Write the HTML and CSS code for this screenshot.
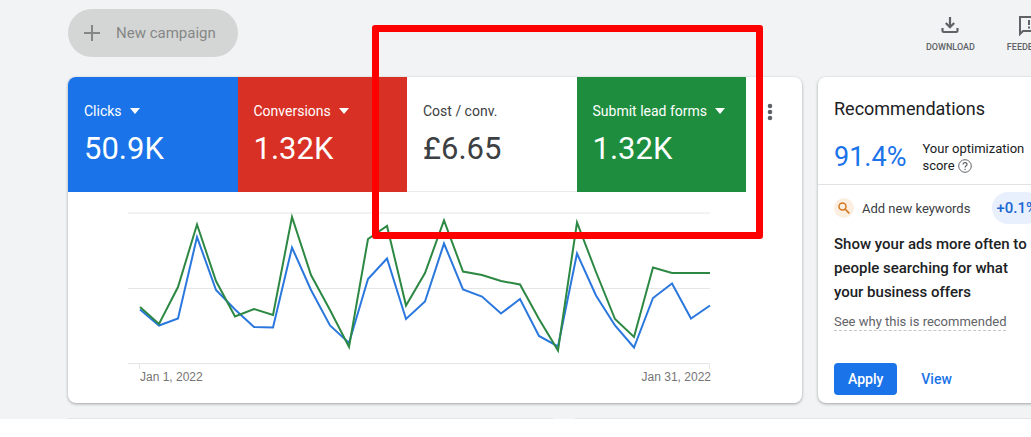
FILE: index.html
```html
<!DOCTYPE html>
<html lang="en">
<head>
<meta charset="utf-8">
<meta name="viewport" content="width=device-width, initial-scale=1">
<title>Campaign overview</title>
<link rel="stylesheet" href="styles.css">
</head>
<body>
<div class="app">
  <header class="toolbar">
    <button class="new-campaign" type="button">
      <svg width="16" height="16" viewBox="0 0 16 16" aria-hidden="true"><path d="M8 0v16M0 8h16" fill="none" stroke="currentColor" stroke-width="2"/></svg>
      New campaign
    </button>
    <nav class="actions" aria-label="Page actions">
      <button class="action" type="button">
        <svg width="18" height="18" viewBox="0 0 18 18" aria-hidden="true"><path d="M9 1v10M4.800 7l4.200 4.200L13.200 7M1.500 12v2.700q0 1.300 1.300 1.300h12.400q1.300 0 1.300-1.300V12" fill="none" stroke="currentColor" stroke-width="2.200"/></svg>
        DOWNLOAD
      </button>
      <button class="action" type="button">
        <svg width="20" height="20" viewBox="0 0 20 20" aria-hidden="true"><path d="M1 18V1h18v14H4z" fill="none" stroke="currentColor" stroke-width="2"/><path d="M10 4v5M10 10.500v2" stroke="currentColor" stroke-width="2"/></svg>
        FEEDBACK
      </button>
    </nav>
  </header>

  <main class="cards">
    <section class="card summary" aria-label="Performance">
      <div class="metrics">
        <button class="metric metric-blue" type="button"><span class="metric-label">Clicks <span class="caret"></span></span><span class="metric-value">50.9K</span></button>
        <button class="metric metric-red" type="button"><span class="metric-label">Conversions <span class="caret"></span></span><span class="metric-value">1.32K</span></button>
        <button class="metric metric-plain" type="button"><span class="metric-label">Cost / conv.</span><span class="metric-value">£6.65</span></button>
        <button class="metric metric-green" type="button"><span class="metric-label">Submit lead forms <span class="caret"></span></span><span class="metric-value">1.32K</span></button>
        <button class="more" type="button" aria-label="More options">
          <svg width="6" height="18" viewBox="0 0 6 18" aria-hidden="true"><g fill="currentColor"><circle cx="3" cy="3" r="2.300"/><circle cx="3" cy="9" r="2.300"/><circle cx="3" cy="15" r="2.300"/></g></svg>
        </button>
      </div>
      <div class="chart">
        <svg class="plot" viewBox="128 192 583 178" role="img" aria-label="Clicks and submitted lead forms per day">
          <path class="grid-line" d="M128 213h582M128 288.500h582M128 363.500h582M139.500 363v6M709.500 363v6"/>
          <polyline class="series series-blue" points="140,309.5 159,325.5 178,318.5 197,237 216,290 235,309.5 254,327 273,327.5 292,247.5 311,290 330,325.5 349,343 368,279 387,258.5 406,319 425,301.5 444,243.5 463,289.5 482,296.5 501,313.5 520,299 539,336 558,346.5 577,253.5 596,295.5 615,325.5 634,347.5 653,298 672,283.5 691,318.5 710,305.5"/>
          <polyline class="series series-green" points="140,307 159,324 178,287 197,224.5 216,281 235,316.5 254,309 273,315 292,217 311,275 330,310 349,347 368,239 387,226 406,305.5 425,273 444,220.5 463,271.5 482,275 501,281 520,284.5 539,319 558,350.5 577,222.5 596,272 615,319 634,337 653,267.5 672,273 691,273 710,273"/>
        </svg>
        <div class="axis"><span>Jan 1, 2022</span><span>Jan 31, 2022</span></div>
      </div>
    </section>

    <section class="card recommendations">
      <div class="rec-head">
        <h2>Recommendations</h2>
        <button class="rec-more" type="button" aria-label="More options">
          <svg width="6" height="18" viewBox="0 0 6 18" aria-hidden="true"><g fill="currentColor"><circle cx="3" cy="3" r="2"/><circle cx="3" cy="9" r="2"/><circle cx="3" cy="15" r="2"/></g></svg>
        </button>
      </div>
      <div class="score">
        <span class="score-value">91.4%</span>
        <span class="score-label">Your optimization<br>score
          <svg class="help" width="14" height="14" viewBox="0 0 14 14" aria-hidden="true"><circle cx="7" cy="7" r="6.300" fill="none" stroke="currentColor"/><path d="M5 5.600q0-2 2-2t2 1.800c0 1.300-1.900 1.400-1.900 3.100M7.100 9.700v1.300" fill="none" stroke="currentColor" stroke-width="1.200"/></svg>
        </span>
      </div>
      <div class="rec-body">
        <div class="rec-type">
          <span class="rec-icon"><svg width="12" height="12" viewBox="0 0 12 12" aria-hidden="true"><circle cx="4.500" cy="4.500" r="3.500" fill="none" stroke="currentColor" stroke-width="1.500"/><path d="M7 7l4.300 4.300" stroke="currentColor" stroke-width="1.700"/></svg></span>
          <span>Add new keywords</span>
          <span class="uplift">+0.1%</span>
        </div>
        <h3>Show your ads more often to people searching for what your business offers</h3>
        <a class="why" href="#why">See why this is recommended</a>
        <div class="rec-actions">
          <button class="apply" type="button">Apply</button>
          <a class="view" href="#view">View</a>
        </div>
      </div>
    </section>
  </main>
  <div class="next-row"><div></div><div></div></div>
  <div class="highlight"></div>
</div>
</body>
</html>
```

FILE: styles.css
```css
* { box-sizing: border-box; }
body {
  margin: 0;
  background: #fff;
  color: #3c4043;
  font-family: Roboto, "Liberation Sans", sans-serif;
}
button {
  border: 0;
  padding: 0;
  background: none;
  color: inherit;
  font: inherit;
  text-align: left;
  cursor: pointer;
}
a { text-decoration: none; }
h2, h3 { margin: 0; }
svg { flex: none; }

.app {
  position: relative;
  overflow: hidden;
  padding-left: 68px;
  background: #f1f3f4;
}
.toolbar {
  display: flex;
  justify-content: space-between;
  align-items: flex-start;
  margin-right: -20px;
  padding: 9px 0 20px;
}
.new-campaign {
  display: flex;
  align-items: center;
  gap: 16px;
  height: 48px;
  padding: 0 22px 0 16px;
  border-radius: 24px;
  background: #d4d6d5;
  color: #858786;
  font-size: 15px;
}
.actions {
  display: flex;
  gap: 32px;
  padding-top: 7px;
  color: #5f6368;
}
.action {
  display: flex;
  flex-direction: column;
  align-items: center;
  justify-content: space-between;
  height: 36px;
  font-size: 9px;
  font-weight: 500;
  line-height: 10px;
}

.cards {
  display: grid;
  grid-template-columns: minmax(0, 1fr) 239px;
  gap: 16px;
  margin-right: -26px;
}
.card {
  border-radius: 8px;
  background: #fff;
  box-shadow: 0 1px 3px rgba(60, 64, 67, 0.45);
}
.summary { overflow: hidden; }
.summary, .recommendations { min-width: 0; }

.metrics {
  display: grid;
  grid-template-columns: repeat(4, minmax(0, 1fr)) 56px;
}
.metric {
  display: flex;
  flex-direction: column;
  gap: 8px;
  height: 115px;
  padding: 24px 0 0 16px;
  color: #fff;
}
.metric-label {
  display: flex;
  align-items: center;
  gap: 8px;
  font-size: 14px;
  line-height: 20px;
  white-space: nowrap;
}
.metric-value {
  font-size: 31px;
  line-height: 40px;
}
.metric-blue { background: #1a73e8; }
.metric-red { background: #d93025; }
.metric-green { background: #1e8e3e; }
.metric-plain {
  border-bottom: 1px solid #e8eaed;
  color: #3c4043;
}
.caret {
  border: 5px solid transparent;
  border-top: 6px solid currentColor;
  border-bottom: 0;
}
.more {
  display: flex;
  align-items: flex-start;
  padding: 26px 0 0 21px;
  color: #5f6368;
}

.chart { padding: 0 91px 18px 60px; }
.plot {
  display: block;
  width: 100%;
  height: auto;
}
.grid-line {
  fill: none;
  stroke: #e6e6e6;
}
.series {
  fill: none;
  stroke-width: 2;
}
.series-blue { stroke: #2a78de; }
.series-green { stroke: #2c8843; }
.axis {
  display: flex;
  justify-content: space-between;
  padding-left: 12px;
  color: #757575;
  font-family: "Liberation Sans", sans-serif;
  font-size: 12px;
  line-height: 15px;
}

.rec-head {
  display: flex;
  align-items: center;
  justify-content: space-between;
  padding: 20px 20px 0 16px;
}
.rec-head h2 {
  color: #202124;
  font-size: 18px;
  font-weight: 400;
  line-height: 24px;
}
.rec-more {
  display: flex;
  color: #5f6368;
}
.score {
  display: flex;
  align-items: center;
  gap: 16px;
  padding: 19px 12px 10px 16px;
  border-bottom: 1px solid #e0e2e5;
}
.score-value {
  color: #1a73e8;
  font-size: 27px;
  line-height: 32px;
}
.score-label {
  color: #202124;
  font-size: 13px;
  line-height: 17px;
  white-space: nowrap;
}
.help {
  vertical-align: -3px;
  color: #5f6368;
}
.rec-body { padding: 7px 16px 8px; }
.rec-type {
  display: flex;
  align-items: center;
  gap: 8px;
  font-size: 13px;
}
.rec-icon {
  display: grid;
  place-items: center;
  width: 20px;
  height: 20px;
  border-radius: 50%;
  background: #fdeee2;
  color: #d27820;
}
.uplift {
  margin-left: auto;
  padding: 0 4px;
  border-radius: 16px;
  background: #e8f0fe;
  color: #1967d2;
  font-size: 15px;
  font-weight: 500;
  line-height: 32px;
}
.rec-body h3 {
  margin-top: 8px;
  color: #202124;
  font-size: 15px;
  font-weight: 500;
  line-height: 24px;
}
.why {
  display: inline-block;
  margin-top: 10px;
  border-bottom: 1px dashed #c4c7ca;
  color: #5f6368;
  font-size: 13px;
  line-height: 16px;
}
.rec-actions {
  display: flex;
  align-items: center;
  gap: 24px;
  margin-top: 32px;
}
.apply {
  height: 32px;
  padding: 0 14px;
  border-radius: 4px;
  background: #1a73e8;
  color: #fff;
  font-size: 14px;
  font-weight: 500;
}
.view {
  color: #1a73e8;
  font-size: 14px;
  font-weight: 500;
}

.next-row {
  display: grid;
  grid-template-columns: 485px minmax(0, 1fr);
  gap: 22px;
  padding-top: 15px;
}
.next-row div {
  height: 1px;
  background: #e2e4e5;
}
.highlight {
  position: absolute;
  top: 25px;
  left: 372px;
  width: 391px;
  height: 214px;
  border: 7px solid #f00;
  border-radius: 3px;
  pointer-events: none;
}
```
